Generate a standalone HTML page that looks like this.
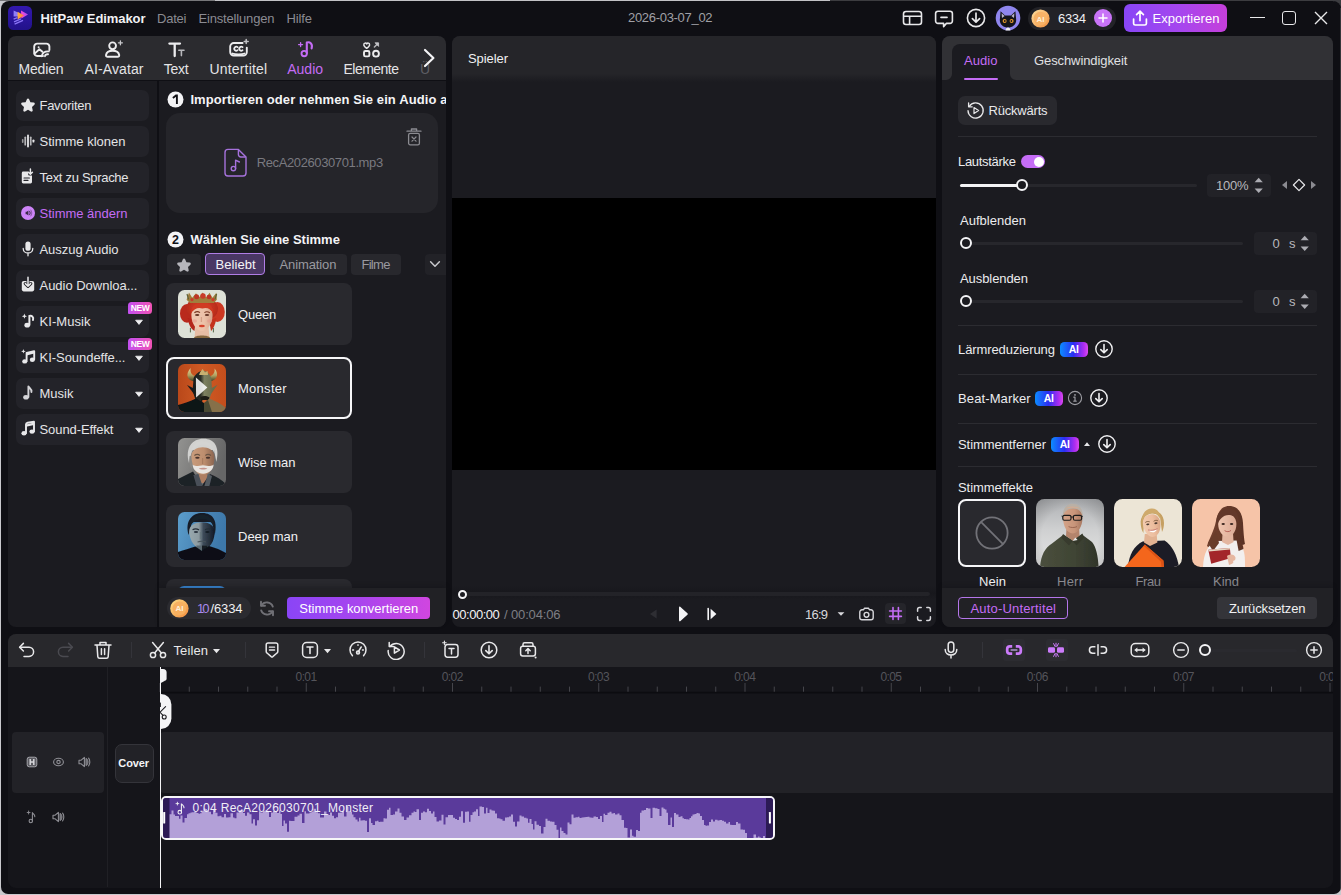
<!DOCTYPE html>
<html><head><meta charset="utf-8"><title>HitPaw Edimakor</title>
<style>
html,body{margin:0;padding:0;}
body{width:1341px;height:895px;overflow:hidden;position:relative;background:#c9c9cd;font-family:"Liberation Sans",sans-serif;}
.b{position:absolute;box-sizing:border-box;display:block;}
.t{position:absolute;white-space:nowrap;line-height:1;display:block;}
</style></head><body>
<div class="b" style="left:0px;top:0px;width:1341px;height:1px;background:#3c3c40;"></div>
<div class="b" style="left:0px;top:0px;width:830px;height:1px;background:#c2c2c6;"></div>
<div class="b" style="left:0px;top:0px;width:215px;height:1px;background:#77777a;"></div>
<div class="b" style="left:1334px;top:0px;width:7px;height:10px;background:#3c3c40;"></div>
<div class="b" style="left:1px;top:1px;width:1340px;height:893px;background:#0f0f14;border-radius:8px 8px 7px 7px;"></div>
<div class="b" style="left:1340px;top:8px;width:1px;height:880px;background:#36363a;"></div>
<svg class="b" style="left:8px;top:6px;" width="24" height="24" viewBox="0 0 24 24" fill="none"><defs><linearGradient id="lg1" x1="0" y1="0" x2="0" y2="1"><stop offset="0" stop-color="#3318ae"/><stop offset="1" stop-color="#22128a"/></linearGradient>
<linearGradient id="lg2" x1="0" y1="0" x2="1" y2="0"><stop offset="0" stop-color="#ffb43a"/><stop offset="1" stop-color="#ff6a4a"/></linearGradient>
<linearGradient id="lg3" x1="0" y1="0" x2="1" y2="0"><stop offset="0" stop-color="#f04ad8"/><stop offset="1" stop-color="#b44af0"/></linearGradient></defs>
<rect width="24" height="24" rx="5.5" fill="url(#lg1)"/>
<path d="M5.6 4.6L10 6.6V10.4L5.6 10.4Z" fill="#8f7cf8"/>
<path d="M13 4.6L20 8.6L13.4 12.4Z" fill="url(#lg3)"/>
<path d="M9.6 5.8L16 9.6L9.6 13.6Z" fill="url(#lg2)"/>
<path d="M5.6 13.2L9.4 11.6M6 15.8L13 12.8M6.6 18.2L15 14.4" stroke="#8a74f6" stroke-width="1.3"/></svg>
<span class="t" style="left:40.5px;top:11.70px;font-size:13px;font-weight:700;letter-spacing:-0.086px;color:#f2f2f4;">HitPaw Edimakor</span>
<span class="t" style="left:157.0px;top:11.70px;font-size:13px;letter-spacing:-0.215px;color:#8b8b92;">Datei</span>
<span class="t" style="left:198.5px;top:11.70px;font-size:13px;letter-spacing:-0.174px;color:#8b8b92;">Einstellungen</span>
<span class="t" style="left:286.5px;top:11.70px;font-size:13px;letter-spacing:-0.129px;color:#8b8b92;">Hilfe</span>
<span class="t" style="left:628.0px;top:11.30px;font-size:13px;letter-spacing:-0.303px;color:#a0a0a6;">2026-03-07_02</span>
<svg class="b" style="left:902px;top:9px;" width="22" height="18" viewBox="0 0 22 18" fill="none"><rect x="1.5" y="2.5" width="18" height="13" rx="2.5" stroke="#e8e8ea" stroke-width="1.6"/><path d="M1.5 7.2H19.5M7.6 7.2V15.5" stroke="#e8e8ea" stroke-width="1.6"/></svg>
<svg class="b" style="left:934px;top:8px;" width="22" height="22" viewBox="0 0 22 22" fill="none"><path d="M4 3.2H16A2.4 2.4 0 0 1 18.4 5.6V13A2.4 2.4 0 0 1 16 15.4H12.4L9.6 18.6V15.4H4A2.4 2.4 0 0 1 1.6 13V5.6A2.4 2.4 0 0 1 4 3.2Z" stroke="#e8e8ea" stroke-width="1.6" stroke-linejoin="round"/><path d="M7 9.3H13" stroke="#e8e8ea" stroke-width="1.7" stroke-linecap="round"/></svg>
<svg class="b" style="left:965px;top:7px;" width="22" height="22" viewBox="0 0 22 22" fill="none"><circle cx="11" cy="11" r="8.6" stroke="#e8e8ea" stroke-width="1.6"/><path d="M11 6.2V15M7.4 11.6L11 15.2L14.6 11.6" stroke="#e8e8ea" stroke-width="1.7" stroke-linecap="round" stroke-linejoin="round"/></svg>
<svg class="b" style="left:995px;top:5px;" width="26" height="26" viewBox="0 0 26 26" fill="none"><circle cx="13" cy="13" r="12.3" fill="#8f86ee"/>
<path d="M5.6 6.2L10 10.6H16L20.4 6.2L21.2 15C21.2 19.6 17.4 22.6 13 22.6C8.6 22.6 4.8 19.6 4.8 15Z" fill="#15151b"/>
<path d="M6.6 8.2L9.6 11L7 13Z" fill="#b8b4c8"/><path d="M19.4 8.2L16.4 11L19 13Z" fill="#b8b4c8"/>
<circle cx="9.6" cy="16" r="2" fill="#e89a2e"/><circle cx="16.6" cy="16" r="2" fill="#e89a2e"/><circle cx="9.8" cy="16" r=".9" fill="#15151b"/><circle cx="16.4" cy="16" r=".9" fill="#15151b"/>
<path d="M10.6 25.4C10.6 21.4 15.4 21.4 15.4 25.4Z" fill="#f0f0f0"/></svg>
<div class="b" style="left:1028px;top:7px;width:88px;height:23px;background:#222227;border-radius:11.5px;"></div>
<svg class="b" style="left:1031px;top:9px;" width="19" height="19" viewBox="0 0 19 19" fill="none"><defs><linearGradient id="cg" x1="0" y1="0" x2="1" y2="1"><stop offset="0" stop-color="#ffe0a0"/><stop offset="1" stop-color="#f2903e"/></linearGradient></defs><circle cx="9.5" cy="9.5" r="9.1" fill="url(#cg)"/><circle cx="9.5" cy="9.5" r="6.8" fill="#f8b266"/><text x="9.5" y="12.5" font-family="Liberation Sans" font-size="8" font-weight="700" fill="#fff0d6" text-anchor="middle">AI</text></svg>
<span class="t" style="left:1058.0px;top:11.80px;font-size:13px;letter-spacing:-0.312px;color:#f0f0f2;">6334</span>
<svg class="b" style="left:1094px;top:9px;" width="18" height="18" viewBox="0 0 18 18" fill="none"><circle cx="9" cy="9" r="9" fill="#c873f7"/><path d="M9 5V13M5 9H13" stroke="#fff" stroke-width="1.5" stroke-linecap="round"/></svg>
<div class="b" style="left:1124px;top:4px;width:103px;height:28px;background:linear-gradient(90deg,#8846f6 0%,#a646ee 55%,#c53fda 100%);border-radius:6px;"></div>
<svg class="b" style="left:1130px;top:8px;" width="20" height="20" viewBox="0 0 20 20" fill="none"><path d="M3.6 11V15.4A1.6 1.6 0 0 0 5.2 17H14.8A1.6 1.6 0 0 0 16.4 15.4V11" stroke="#fff" stroke-width="1.7" stroke-linecap="round"/><path d="M10 12.6V3.4M6.6 6.6L10 3.2L13.4 6.6" stroke="#fff" stroke-width="1.7" stroke-linecap="round" stroke-linejoin="round"/></svg>
<span class="t" style="left:1152.5px;top:11.80px;font-size:13px;letter-spacing:0.050px;color:#fff;">Exportieren</span>
<div class="b" style="left:1249.5px;top:17.2px;width:15px;height:1.3px;background:#e8e8ea;"></div>
<div class="b" style="left:1282px;top:11px;width:14px;height:14px;background:transparent;border-radius:3px;border:1.3px solid #e8e8ea;"></div>
<svg class="b" style="left:1313px;top:10px;" width="16" height="16" viewBox="0 0 16 16" fill="none"><path d="M2 2L14 14M14 2L2 14" stroke="#e8e8ea" stroke-width="1.4"/></svg>
<div class="b" style="left:8px;top:36px;width:438px;height:44px;background:#2b2b2f;border-radius:8px 8px 0 0;"></div>
<svg class="b" style="left:32px;top:41px;" width="20" height="18" viewBox="0 0 20 18" fill="none"><path d="M11 15H5.2A3 3 0 0 1 2.2 12V5.6A3 3 0 0 1 5.2 2.6H14.4A3 3 0 0 1 17.4 5.6V9" stroke="#ececee" stroke-width="1.9" stroke-linecap="round" stroke-linejoin="round"/><path d="M2.6 12.6L7.4 8.2L10.4 10.8" stroke="#ececee" stroke-width="1.9" stroke-linecap="round" stroke-linejoin="round"/><circle cx="6.6" cy="6.2" r="1" fill="#e8e8ea"/><path d="M9.8 15.2C10.2 12.2 12.6 10.2 16.8 10.4" stroke="#ececee" stroke-width="1.9" stroke-linecap="round" stroke-linejoin="round"/><path d="M13 15.2C13.2 14 14.4 13.2 16 13.3" stroke="#ececee" stroke-width="1.9" stroke-linecap="round" stroke-linejoin="round"/></svg>
<span class="t" style="left:18.5px;top:62.25px;font-size:14px;letter-spacing:-0.178px;color:#e4e4e6;">Medien</span>
<svg class="b" style="left:104px;top:39px;" width="22" height="20" viewBox="0 0 22 20" fill="none"><circle cx="8.6" cy="6.8" r="3.4" stroke="#ececee" stroke-width="1.9" stroke-linecap="round" stroke-linejoin="round"/><path d="M3.6 17.8H13.6C14.6 17.8 15.4 17 15.2 16C14.6 13 12 11.8 8.6 11.8C5.2 11.8 2.6 13 2 16C1.8 17 2.6 17.8 3.6 17.8Z" stroke="#ececee" stroke-width="1.9" stroke-linecap="round" stroke-linejoin="round"/><path d="M16.4 1.8V5.8M14.4 3.8H18.4" stroke="#c8c8cc" stroke-width="1.3" stroke-linecap="round"/></svg>
<span class="t" style="left:84.5px;top:62.25px;font-size:14px;letter-spacing:0.113px;color:#e4e4e6;">AI-Avatar</span>
<svg class="b" style="left:167px;top:40px;" width="19" height="19" viewBox="0 0 19 19" fill="none"><path d="M2.4 3.6H13M7.7 3.6V16" stroke="#ececee" stroke-width="2.3" stroke-linecap="round"/><path d="M11.8 10.2H17M14.4 10.2V15.6" stroke="#b8b8bc" stroke-width="1.6" stroke-linecap="round"/></svg>
<span class="t" style="left:163.7px;top:62.25px;font-size:14px;letter-spacing:-0.224px;color:#e4e4e6;">Text</span>
<svg class="b" style="left:228px;top:38px;" width="22" height="20" viewBox="0 0 22 20" fill="none"><path d="M14.6 5H5.8A3.6 3.6 0 0 0 2.2 8.6V14A3.6 3.6 0 0 0 5.8 17.6H15.2A3.6 3.6 0 0 0 18.8 14V9.6" stroke="#ececee" stroke-width="1.9" stroke-linecap="round" stroke-linejoin="round"/><path d="M4.4 15.4C7 16.6 14 16.6 16.6 15.4" stroke="#ececee" stroke-width="1.6" stroke-linecap="round"/><path d="M9.6 9.2A2 2 0 1 0 9.6 12.2M14.6 9.2A2 2 0 1 0 14.6 12.2" stroke="#ececee" stroke-width="1.7" stroke-linecap="round"/><path d="M18.2 1.4V5.4M16.2 3.4H20.2" stroke="#c0c0c4" stroke-width="1.5" stroke-linecap="round"/></svg>
<span class="t" style="left:209.5px;top:62.25px;font-size:14px;letter-spacing:0.167px;color:#e4e4e6;">Untertitel</span>
<svg class="b" style="left:296px;top:39px;" width="20" height="20" viewBox="0 0 20 20" fill="none"><path d="M10.8 14V3.6C13.6 2.6 17 4.4 15.6 9.4" stroke="#c46cf5" stroke-width="2.1" stroke-linecap="round" stroke-linejoin="round"/><circle cx="8.2" cy="14.6" r="2.7" stroke="#c46cf5" stroke-width="1.9"/><path d="M4.6 3.6V7.6M2.6 5.6H6.6" stroke="#c46cf5" stroke-width="1.3" stroke-linecap="round"/></svg>
<span class="t" style="left:287.3px;top:62.25px;font-size:14px;letter-spacing:-0.024px;color:#c46cf5;">Audio</span>
<svg class="b" style="left:361px;top:40px;" width="22" height="20" viewBox="0 0 22 20" fill="none"><rect x="3" y="11" width="5.4" height="5.4" rx="1.4" stroke="#ececee" stroke-width="1.9" stroke-linecap="round" stroke-linejoin="round"/><circle cx="15" cy="13.7" r="2.9" stroke="#ececee" stroke-width="1.9" stroke-linecap="round" stroke-linejoin="round"/><path d="M5.7 8.4C3.6 7 2.6 5.6 2.8 4.4C3 2.8 5 2.6 5.7 4C6.4 2.6 8.4 2.8 8.6 4.4C8.8 5.6 7.8 7 5.7 8.4Z" stroke="#e8e8ea" stroke-width="1.4" stroke-linejoin="round"/><path d="M13.4 7L16.8 3.6" stroke="#b4b4b8" stroke-width="1.5" stroke-linecap="round"/><path d="M14 2.8H17.6V6.4Z" fill="#c4c4c8" stroke="#c4c4c8" stroke-width=".8" stroke-linejoin="round"/></svg>
<span class="t" style="left:343.5px;top:62.25px;font-size:14px;letter-spacing:-0.518px;color:#e4e4e6;">Elemente</span>
<span class="t" style="left:420.0px;top:62.25px;font-size:14px;letter-spacing:0.000px;color:#5e5e64;">Ü</span>
<svg class="b" style="left:422px;top:48px;" width="14" height="20" viewBox="0 0 14 20" fill="none"><path d="M3 2L11.4 10L3 18" stroke="#f4f4f6" stroke-width="2.2" stroke-linecap="round" stroke-linejoin="round"/></svg>
<div class="b" style="left:8px;top:81px;width:149px;height:546px;background:#1b1b20;border-radius:0 0 0 8px;"></div>
<div class="b" style="left:159px;top:81px;width:287px;height:546px;background:#1b1b20;border-radius:0 0 8px 0;"></div>
<div class="b" style="left:16px;top:90px;width:133px;height:31px;background:#232329;border-radius:7px;"></div>
<span class="t" style="left:39.5px;top:99.20px;font-size:13px;letter-spacing:-0.275px;color:#e4e4e6;">Favoriten</span>
<div class="b" style="left:16px;top:126px;width:133px;height:31px;background:#232329;border-radius:7px;"></div>
<span class="t" style="left:39.5px;top:135.20px;font-size:13px;letter-spacing:0.000px;color:#e4e4e6;">Stimme klonen</span>
<div class="b" style="left:16px;top:162px;width:133px;height:31px;background:#232329;border-radius:7px;"></div>
<span class="t" style="left:39.5px;top:171.20px;font-size:13px;letter-spacing:-0.302px;color:#e4e4e6;">Text zu Sprache</span>
<div class="b" style="left:16px;top:198px;width:133px;height:31px;background:#232329;border-radius:7px;"></div>
<span class="t" style="left:39.5px;top:207.20px;font-size:13px;letter-spacing:-0.014px;color:#c46cf5;">Stimme ändern</span>
<div class="b" style="left:16px;top:234px;width:133px;height:31px;background:#232329;border-radius:7px;"></div>
<span class="t" style="left:39.5px;top:243.20px;font-size:13px;letter-spacing:-0.048px;color:#e4e4e6;">Auszug Audio</span>
<div class="b" style="left:16px;top:270px;width:133px;height:31px;background:#232329;border-radius:7px;"></div>
<span class="t" style="left:39.5px;top:279.20px;font-size:13px;letter-spacing:-0.021px;color:#e4e4e6;">Audio Downloa...</span>
<div class="b" style="left:16px;top:306px;width:133px;height:31px;background:#232329;border-radius:7px;"></div>
<span class="t" style="left:39.5px;top:315.20px;font-size:13px;letter-spacing:0.062px;color:#e4e4e6;">KI-Musik</span>
<svg class="b" style="left:133.5px;top:318.5px;" width="10" height="7" viewBox="0 0 10 7" fill="none"><path d="M1.6 1.2H8.4L5 5.4Z" fill="#f0f0f2" stroke="#f0f0f2" stroke-width=".8" stroke-linejoin="round"/></svg>
<div class="b" style="left:16px;top:342px;width:133px;height:31px;background:#232329;border-radius:7px;"></div>
<span class="t" style="left:39.5px;top:351.20px;font-size:13px;letter-spacing:-0.036px;color:#e4e4e6;">KI-Soundeffe...</span>
<svg class="b" style="left:133.5px;top:354.5px;" width="10" height="7" viewBox="0 0 10 7" fill="none"><path d="M1.6 1.2H8.4L5 5.4Z" fill="#f0f0f2" stroke="#f0f0f2" stroke-width=".8" stroke-linejoin="round"/></svg>
<div class="b" style="left:16px;top:378px;width:133px;height:31px;background:#232329;border-radius:7px;"></div>
<span class="t" style="left:39.5px;top:387.20px;font-size:13px;letter-spacing:0.012px;color:#e4e4e6;">Musik</span>
<svg class="b" style="left:133.5px;top:390.5px;" width="10" height="7" viewBox="0 0 10 7" fill="none"><path d="M1.6 1.2H8.4L5 5.4Z" fill="#f0f0f2" stroke="#f0f0f2" stroke-width=".8" stroke-linejoin="round"/></svg>
<div class="b" style="left:16px;top:414px;width:133px;height:31px;background:#232329;border-radius:7px;"></div>
<span class="t" style="left:39.5px;top:423.20px;font-size:13px;letter-spacing:-0.085px;color:#e4e4e6;">Sound-Effekt</span>
<svg class="b" style="left:133.5px;top:426.5px;" width="10" height="7" viewBox="0 0 10 7" fill="none"><path d="M1.6 1.2H8.4L5 5.4Z" fill="#f0f0f2" stroke="#f0f0f2" stroke-width=".8" stroke-linejoin="round"/></svg>
<svg class="b" style="left:20px;top:97px;" width="16" height="16" viewBox="0 0 16 16" fill="none"><path d="M8 1.4C8.5 1.4 8.9 1.7 9.1 2.2L10.4 5.2L13.7 5.6C14.8 5.7 15.2 7 14.4 7.7L12 9.9L12.7 13.2C12.9 14.3 11.8 15 10.9 14.5L8 12.8L5.1 14.5C4.2 15 3.1 14.3 3.3 13.2L4 9.9L1.6 7.7C0.8 7 1.2 5.7 2.3 5.6L5.6 5.2L6.9 2.2C7.1 1.7 7.5 1.4 8 1.4Z" fill="#e8e8ea"/></svg>
<svg class="b" style="left:20px;top:133px;" width="16" height="16" viewBox="0 0 16 16" fill="none"><g fill="#e8e8ea"><rect x="7.1" y="1.5" width="1.8" height="13" rx=".9"/><rect x="4.4" y="3.5" width="1.7" height="9" rx=".85" opacity=".75"/><rect x="9.9" y="3.5" width="1.7" height="9" rx=".85" opacity=".75"/><rect x="1.9" y="6" width="1.6" height="4" rx=".8" opacity=".6"/><rect x="12.5" y="6.4" width="1.9" height="3.2" rx=".9"/></g></svg>
<svg class="b" style="left:20px;top:168px;" width="16" height="17" viewBox="0 0 16 17" fill="none"><path d="M3.2 3.6H8.2V6.6A1 1 0 0 0 9.2 7.6H12V14A1.4 1.4 0 0 1 10.6 15.4H3.2A1.4 1.4 0 0 1 1.8 14V5A1.4 1.4 0 0 1 3.2 3.6Z" fill="#e8e8ea"/><path d="M4 10H9.4M4 12.4H8" stroke="#232329" stroke-width="1.1" stroke-linecap="round"/><path d="M10.4 1V6M8.4 4.2L10.4 6.2L12.4 4.2" stroke="#e8e8ea" stroke-width="1.5" stroke-linecap="round" stroke-linejoin="round"/></svg>
<svg class="b" style="left:20px;top:205px;" width="16" height="16" viewBox="0 0 16 16" fill="none"><circle cx="8" cy="8" r="7" fill="#cd84f7"/><path d="M5.6 6.8H6.8L8.4 5.4V10.6L6.8 9.2H5.6Z" fill="#3a2a48"/><path d="M9.6 6.2C10.4 7.2 10.4 8.8 9.6 9.8" stroke="#3a2a48" stroke-width="1" stroke-linecap="round"/><path d="M10.8 5C12.2 6.6 12.2 9.4 10.8 11" stroke="#3a2a48" stroke-width=".8" stroke-linecap="round" opacity=".6"/></svg>
<svg class="b" style="left:20px;top:240px;" width="16" height="18" viewBox="0 0 16 18" fill="none"><rect x="5.4" y="1.4" width="5.2" height="9.4" rx="2.6" fill="#e8e8ea"/><path d="M3.2 8.4C3.2 11.2 5.4 13 8 13C10.6 13 12.8 11.2 12.8 8.4M8 13V15.8" stroke="#e8e8ea" stroke-width="1.3" stroke-linecap="round"/></svg>
<svg class="b" style="left:20px;top:276px;" width="16" height="17" viewBox="0 0 16 17" fill="none"><rect x="1.8" y="5" width="12.4" height="10.4" rx="1.8" fill="#e8e8ea"/><path d="M8 1.4V10M5.2 7.6L8 10.4L10.8 7.6" stroke="#232329" stroke-width="3" stroke-linecap="round" stroke-linejoin="round"/><path d="M8 1.2V10M5.4 7.6L8 10.2L10.6 7.6" stroke="#e8e8ea" stroke-width="1.5" stroke-linecap="round" stroke-linejoin="round"/></svg>
<svg class="b" style="left:20px;top:312px;" width="17" height="17" viewBox="0 0 17 17" fill="none"><path d="M9.4 13V4C11.4 3.2 14 4.6 13 8" stroke="#e8e8ea" stroke-width="2" stroke-linecap="round"/><ellipse cx="7.2" cy="13.2" rx="2.8" ry="2.4" fill="#e8e8ea"/><path d="M4.4 1.6L5.1 3.5L7 4.2L5.1 4.9L4.4 6.8L3.7 4.9L1.8 4.2L3.7 3.5Z" fill="#e8e8ea"/></svg>
<svg class="b" style="left:20px;top:348px;" width="17" height="17" viewBox="0 0 17 17" fill="none"><path d="M6.6 13.2V5L14.2 3.2V11.6" stroke="#e8e8ea" stroke-width="1.9" stroke-linecap="round" stroke-linejoin="round"/><path d="M6.6 5L14.2 3.2V5.6L6.6 7.4Z" fill="#e8e8ea"/><ellipse cx="4.7" cy="13.4" rx="2.5" ry="2.2" fill="#e8e8ea"/><ellipse cx="12.3" cy="11.8" rx="2.5" ry="2.2" fill="#e8e8ea"/><path d="M3.4 1L4 2.7L5.7 3.3L4 3.9L3.4 5.6L2.8 3.9L1.1 3.3L2.8 2.7Z" fill="#e8e8ea"/></svg>
<svg class="b" style="left:20px;top:384px;" width="16" height="17" viewBox="0 0 16 17" fill="none"><path d="M8.4 13V2.4C9 4.2 12 4.6 11.4 8" stroke="#d4d4d8" stroke-width="1.9" stroke-linecap="round" stroke-linejoin="round"/><ellipse cx="6" cy="13.2" rx="2.8" ry="2.3" fill="#d4d4d8"/></svg>
<svg class="b" style="left:20px;top:420px;" width="17" height="17" viewBox="0 0 17 17" fill="none"><path d="M6 13V4.6C6 3.6 6.6 3 7.6 2.8L14 1.8V11.4" stroke="#e8e8ea" stroke-width="1.9" stroke-linecap="round" stroke-linejoin="round"/><path d="M6 4.4L14 2.6V5L6 6.8Z" fill="#e8e8ea"/><ellipse cx="4" cy="13.2" rx="2.6" ry="2.2" fill="#e8e8ea"/><ellipse cx="12" cy="11.6" rx="2.6" ry="2.2" fill="#e8e8ea"/></svg>
<div class="b" style="left:128.3px;top:302px;width:23.7px;height:12px;background:linear-gradient(90deg,#c250f0,#f052b4);border-radius:3.5px 3.5px 3.5px 1px;"></div>
<span class="t" style="left:130.8px;top:304.10px;font-size:8.5px;font-weight:700;letter-spacing:-0.416px;color:#fff;">NEW</span>
<div class="b" style="left:128.3px;top:338px;width:23.7px;height:12px;background:linear-gradient(90deg,#c250f0,#f052b4);border-radius:3.5px 3.5px 3.5px 1px;"></div>
<span class="t" style="left:130.8px;top:340.10px;font-size:8.5px;font-weight:700;letter-spacing:-0.416px;color:#fff;">NEW</span>
<svg class="b" style="left:167px;top:90.5px;" width="17" height="17" viewBox="0 0 17 17" fill="none"><circle cx="8.5" cy="8.5" r="8" fill="#f4f4f6"/><path d="M5.9 6.9L9 4.5H9.9V13" stroke="#111116" stroke-width="1.9" stroke-linejoin="miter"/></svg>
<div class="b" style="left:190px;top:89px;width:256px;height:20px;overflow:hidden;">
<span class="t" style="left:0.4px;top:3.60px;font-size:13px;font-weight:700;letter-spacing:0.105px;color:#f4f4f6;">Importieren oder nehmen Sie ein Audio auf</span>
</div>
<div class="b" style="left:166px;top:113px;width:272px;height:100px;background:#25252a;border-radius:14px;"></div>
<svg class="b" style="left:223px;top:147px;" width="27" height="32" viewBox="0 0 27 32" fill="none"><path d="M5 2.4H15.4L23 10V26A3 3 0 0 1 20 29H5A3 3 0 0 1 2 26V5.4A3 3 0 0 1 5 2.4Z" stroke="#a672dc" stroke-width="1.4" stroke-linejoin="round"/><path d="M15.4 2.6V7.6A2.4 2.4 0 0 0 17.8 10H22.8" stroke="#a672dc" stroke-width="1.4"/><path d="M12.6 21.4V13.2L16.4 15" stroke="#a672dc" stroke-width="1.4" stroke-linecap="round" stroke-linejoin="round"/><circle cx="10.4" cy="21.6" r="2.2" stroke="#a672dc" stroke-width="1.4"/></svg>
<span class="t" style="left:256.7px;top:155.60px;font-size:13px;letter-spacing:-0.385px;color:#7a7a80;">RecA2026030701.mp3</span>
<svg class="b" style="left:405px;top:127px;" width="18" height="20" viewBox="0 0 18 20" fill="none"><path d="M2 4.2H16M6.4 4V2H11.6V4" stroke="#8b8b91" stroke-width="1.3" stroke-linecap="round" stroke-linejoin="round"/><rect x="3.6" y="6.4" width="10.8" height="11.4" rx="1.6" stroke="#8b8b91" stroke-width="1.3"/><path d="M7 10L11 14.2M11 10L7 14.2" stroke="#8b8b91" stroke-width="1.2" stroke-linecap="round"/></svg>
<svg class="b" style="left:167px;top:231px;" width="17" height="17" viewBox="0 0 17 17" fill="none"><circle cx="8.5" cy="8.5" r="8" fill="#f4f4f6"/><text x="8.5" y="13" font-family="Liberation Sans" font-size="12.5" font-weight="700" fill="#111116" text-anchor="middle">2</text></svg>
<span class="t" style="left:190.4px;top:233.30px;font-size:13px;font-weight:700;letter-spacing:-0.002px;color:#f4f4f6;">Wählen Sie eine Stimme</span>
<div class="b" style="left:167px;top:254px;width:34px;height:21px;background:#27272c;border-radius:4px;"></div>
<svg class="b" style="left:176px;top:256.5px;" width="16" height="16" viewBox="0 0 16 16" fill="none"><path d="M8 1.4C8.5 1.4 8.9 1.7 9.1 2.2L10.4 5.2L13.7 5.6C14.8 5.7 15.2 7 14.4 7.7L12 9.9L12.7 13.2C12.9 14.3 11.8 15 10.9 14.5L8 12.8L5.1 14.5C4.2 15 3.1 14.3 3.3 13.2L4 9.9L1.6 7.7C0.8 7 1.2 5.7 2.3 5.6L5.6 5.2L6.9 2.2C7.1 1.7 7.5 1.4 8 1.4Z" fill="#b6b6bc"/></svg>
<div class="b" style="left:205px;top:253px;width:60px;height:22px;background:#4a3764;border-radius:4px;border:1px solid #b07de6;"></div>
<span class="t" style="left:215.4px;top:257.70px;font-size:13px;letter-spacing:0.089px;color:#f4f4f6;">Beliebt</span>
<div class="b" style="left:269.5px;top:254px;width:77px;height:21px;background:#28282d;border-radius:4px;"></div>
<span class="t" style="left:279.5px;top:257.70px;font-size:13px;letter-spacing:-0.104px;color:#9a9aa0;">Animation</span>
<div class="b" style="left:351px;top:254px;width:50px;height:21px;background:#28282d;border-radius:4px;"></div>
<span class="t" style="left:361.4px;top:257.70px;font-size:13px;letter-spacing:-0.695px;color:#9a9aa0;">Filme</span>
<div class="b" style="left:424.5px;top:254px;width:21.5px;height:21px;background:#222227;border-radius:4px 0 0 4px;"></div>
<svg class="b" style="left:429px;top:260px;" width="12" height="9" viewBox="0 0 12 9" fill="none"><path d="M1.6 1.8L6 6.2L10.4 1.8" stroke="#c8c8cc" stroke-width="1.5" stroke-linecap="round" stroke-linejoin="round"/></svg>
<div class="b" style="left:166px;top:283px;width:186px;height:62px;background:#29292e;border-radius:8px;"></div>
<span class="t" style="left:238.0px;top:308.20px;font-size:13px;letter-spacing:-0.187px;color:#f0f0f2;">Queen</span>
<div class="b" style="left:166px;top:357px;width:186px;height:62px;background:#29292e;border-radius:8px;border:2px solid #f6f6f8;"></div>
<span class="t" style="left:238.0px;top:382.20px;font-size:13px;letter-spacing:0.272px;color:#f0f0f2;">Monster</span>
<div class="b" style="left:166px;top:431px;width:186px;height:62px;background:#29292e;border-radius:8px;"></div>
<span class="t" style="left:238.0px;top:456.20px;font-size:13px;letter-spacing:-0.042px;color:#f0f0f2;">Wise man</span>
<div class="b" style="left:166px;top:505px;width:186px;height:62px;background:#29292e;border-radius:8px;"></div>
<span class="t" style="left:238.0px;top:530.20px;font-size:13px;letter-spacing:0.000px;color:#f0f0f2;">Deep man</span>
<div class="b" style="left:166px;top:579px;width:186px;height:20px;background:#29292e;border-radius:8px 8px 0 0;"></div>
<div class="b" style="left:178px;top:586px;width:48px;height:10px;background:#3b8ee0;border-radius:6px 6px 0 0;"></div>
<svg class="b" style="left:178px;top:290px;" width="48" height="48" viewBox="0 0 48 48" fill="none"><defs><filter id="bl" x="-10%" y="-10%" width="120%" height="120%"><feGaussianBlur stdDeviation=".75"/></filter><filter id="bl2" x="-10%" y="-10%" width="120%" height="120%"><feGaussianBlur stdDeviation="1.3"/></filter><clipPath id="ca"><rect width="48" height="48" rx="6.5"/></clipPath>
<radialGradient id="qh" cx=".5" cy=".45" r=".6"><stop offset="0" stop-color="#dc4228"/><stop offset="1" stop-color="#b0271a"/></radialGradient>
<linearGradient id="qf" x1="0" y1="0" x2="1" y2="0"><stop offset="0" stop-color="#efc9b2"/><stop offset=".6" stop-color="#ecc1a8"/><stop offset="1" stop-color="#d6a48a"/></linearGradient></defs>
<g clip-path="url(#ca)"><rect width="48" height="48" fill="#dde1d7"/>
<g filter="url(#bl)">
<ellipse cx="9" cy="23.4" rx="7" ry="9.4" fill="#b92a1b"/><ellipse cx="39.4" cy="22" rx="7.4" ry="10" fill="#cc3822"/>
<ellipse cx="24" cy="19" rx="16" ry="12" fill="url(#qh)"/>
<path d="M9.6 28C11 37 14 39 16.4 41L18 30Z" fill="#b4281a"/><path d="M38.4 28C37 36 35 39 33 41L31 30Z" fill="#c4321e"/>
<path d="M17.4 37H30.6L31.5 48H16.5Z" fill="#e6bca4"/>
<path d="M13.4 25C12.8 13 35.2 13 34.6 25C34.6 33.6 29.4 41 24 41C18.6 41 13.4 33.6 13.4 25Z" fill="url(#qf)"/>
<path d="M12.8 24C13 14.5 20 12 24.6 14C29 12 35.4 14.4 35.4 24C33 18.6 28.6 17 24.4 18.6C20.6 17 15.6 18.6 12.8 24Z" fill="#d03a22"/>
<path d="M8.6 9.8L11 2.6L14.2 7.8L18 3.2L21 7.6L24.6 2.6L28 7.4L31.6 2.8L34.4 7.8L38.4 2.8L38.8 9.8L36 13H12Z" fill="#a07e3c"/>
<circle cx="18.6" cy="6.8" r="2.5" fill="#bd3628"/><circle cx="25" cy="6" r="2.7" fill="#c93b2a"/><circle cx="31" cy="7" r="2.3" fill="#bd3628"/><circle cx="14" cy="9.6" r="1.6" fill="#c93b2a"/><circle cx="35" cy="9.6" r="1.6" fill="#c93b2a"/>
<path d="M9 4L10.6 9.4M38.6 4L37 9.4" stroke="#5e6236" stroke-width="1.2"/>
<path d="M16.4 22.8C18 21.6 20.6 21.6 22 22.6M26.4 22.6C27.8 21.6 30.2 21.6 31.8 22.8" stroke="#7a3a24" stroke-width="1.1"/>
<ellipse cx="19.2" cy="25" rx="2.2" ry="1" fill="#653626"/><ellipse cx="29" cy="25" rx="2.2" ry="1" fill="#653626"/>
<ellipse cx="16.4" cy="31" rx="2.6" ry="1.8" fill="#e6958a" opacity=".55"/><ellipse cx="31.6" cy="31" rx="2.6" ry="1.8" fill="#e6958a" opacity=".55"/>
<path d="M23.4 27V32" stroke="#d6a088" stroke-width="1.3"/>
<ellipse cx="23.9" cy="36" rx="3" ry="1.35" fill="#d4432c"/>
<path d="M16 48C16 44.6 32 44.6 32 48Z" fill="#85663c"/>
<path d="M12.4 38V42.4M35.4 38V42.4" stroke="#46583a" stroke-width=".9"/>
</g></g></svg>
<svg class="b" style="left:178px;top:364px;" width="48" height="48" viewBox="0 0 48 48" fill="none"><defs><clipPath id="cb"><rect width="48" height="48" rx="6.5"/></clipPath>
<linearGradient id="mg" x1="0" y1="0" x2="1" y2="0"><stop offset="0" stop-color="#b9481a"/><stop offset=".5" stop-color="#cf5a24"/><stop offset="1" stop-color="#c44e1c"/></linearGradient>
<linearGradient id="mh" x1="0" y1="0" x2="1" y2="0"><stop offset="0" stop-color="#15181a"/><stop offset=".42" stop-color="#2a2e26"/><stop offset=".6" stop-color="#7d8060"/><stop offset="1" stop-color="#6a6e4e"/></linearGradient>
<linearGradient id="mhorn" x1="0" y1="0" x2="0" y2="1"><stop offset="0" stop-color="#e6d69a"/><stop offset=".55" stop-color="#b0a060"/><stop offset="1" stop-color="#3e3e22"/></linearGradient></defs>
<g clip-path="url(#cb)"><rect width="48" height="48" fill="url(#mg)"/>
<g filter="url(#bl)">
<path d="M16.6 17.4C9.6 16.6 6.6 10.6 12.6 4C11.8 9.4 14.6 11.8 19.4 13Z" fill="url(#mhorn)"/>
<path d="M31.4 17.4C38.4 16.6 41.8 10.6 36.6 4.4C37.2 9.4 34.4 11.8 29.6 13Z" fill="url(#mhorn)"/>
<path d="M9 21L17 25L16 30Z" fill="#17181a"/><path d="M39.6 20.8L31 25.6L32.6 30.4Z" fill="#6a6e48"/>
<path d="M15.6 14C18 8.6 24 5.6 25 7.4C27 5.6 32 9 33.4 14.6L34 27L30.4 38.6H18.4L14.6 27Z" fill="url(#mh)"/>
<path d="M22 8.6L24.6 5L27 8.4L29.6 7L30 11H21Z" fill="#c8b070"/>
<path d="M22.4 33C25 31.4 29.6 31.6 31.4 33.6L30 38.4H23.4Z" fill="#1c1a16"/><path d="M24 36.6C26 35.8 28.6 36 29.8 37L29 39H24.6Z" fill="#d8602a"/>
<path d="M0 48V41C6 39.6 12 37.4 18 34.6L26 39V48Z" fill="#101318"/>
<path d="M26 48V39L31.4 34.6C37 37 43 40 48 44V48Z" fill="#86704a"/>
<path d="M26 39L30 36L34 48H26Z" fill="#4a4a32"/>
</g>
<path d="M17.9 13.6L29.4 23.6L18.1 33.6Z" fill="#fff" fill-opacity=".86"/>
</g></svg>
<svg class="b" style="left:178px;top:438px;" width="48" height="48" viewBox="0 0 48 48" fill="none"><defs><clipPath id="cc"><rect width="48" height="48" rx="6.5"/></clipPath>
<linearGradient id="wg" x1="0" y1="0" x2="1" y2=".3"><stop offset="0" stop-color="#939391"/><stop offset=".5" stop-color="#7c7c7b"/><stop offset="1" stop-color="#666667"/></linearGradient>
<linearGradient id="wf" x1="0" y1="0" x2="1" y2="0"><stop offset="0" stop-color="#c99c7c"/><stop offset=".55" stop-color="#bd8e6e"/><stop offset="1" stop-color="#8a6450"/></linearGradient></defs>
<g clip-path="url(#cc)"><rect width="48" height="48" fill="url(#wg)"/>
<g filter="url(#bl)">
<path d="M11 25C6.6 9 15 .4 26 .8C36 1 42 8 38.4 24L36 12H14Z" fill="#d2d2d0"/>
<path d="M11.6 18C10.6 24 12 29 14 31L14.6 18Z" fill="#8a8884"/>
<path d="M13.4 18.6C12.8 6.6 36 6 36.4 18.6C36.8 28 32 37.6 25.2 37.6C18.6 37.6 13.6 28 13.4 18.6Z" fill="url(#wf)"/>
<path d="M13 15.6C14 5 21 2.8 25.6 3.4C31 3.8 36.4 7.4 36.6 15.6C33.6 8.4 29 6.6 25 6.8C20.4 6.8 15.8 8.6 13 15.6Z" fill="#d4d4d2"/>
<path d="M16.4 17.6C18 16.4 20.6 16.4 22 17.4M27.4 17.4C28.8 16.4 31.4 16.4 33 17.6" stroke="#6a5444" stroke-width="1.2"/>
<ellipse cx="19.4" cy="19.8" rx="2.2" ry="1" fill="#46302a"/><ellipse cx="30" cy="19.8" rx="2.2" ry="1" fill="#46302a"/>
<path d="M24.6 20V26" stroke="#a87c60" stroke-width="1.2"/>
<path d="M14.6 26.6C15 38.4 35 39 35.6 26.6C33 29.4 29 27.2 25 27.2C21.4 27.2 17 29.4 14.6 26.6Z" fill="#e8e4e0"/>
<path d="M20.8 30.4C23 29.4 27.2 29.4 29.4 30.4C27.2 31.8 23 31.8 20.8 30.4Z" fill="#c4948c"/>
<path d="M20.4 36.6H29.8L30 45H20Z" fill="#ae7e62"/>
<path d="M0 48V41C5 38.4 10 36 15 33.6L24 47.6L32 36C38 38.4 43.6 41.6 48 46V48Z" fill="#1c2026"/>
<path d="M15.4 37L20.4 36L24.6 48H18.6Z" fill="#4a5058"/><path d="M29.8 36L34 38L31.4 48H26.4Z" fill="#555b63"/>
</g></g></svg>
<svg class="b" style="left:178px;top:512px;" width="48" height="48" viewBox="0 0 48 48" fill="none"><defs><clipPath id="cd"><rect width="48" height="48" rx="6.5"/></clipPath>
<linearGradient id="dg" x1="0" y1="0" x2="1" y2=".25"><stop offset="0" stop-color="#5b9dcb"/><stop offset=".55" stop-color="#4a86b6"/><stop offset="1" stop-color="#3d78aa"/></linearGradient>
<linearGradient id="df" x1="0" y1="0" x2="1" y2="0"><stop offset="0" stop-color="#98a8ae"/><stop offset=".38" stop-color="#8c9aa0"/><stop offset="0.56" stop-color="#3c4a58"/><stop offset="1" stop-color="#121a26"/></linearGradient></defs>
<g clip-path="url(#cd)"><rect width="48" height="48" fill="url(#dg)"/>
<g filter="url(#bl)">
<path d="M10.6 23C6.6 8 15 .8 24.6 1C34.6 1.2 40 8 36.8 23L34 10H14Z" fill="#161c26"/>
<path d="M11.2 19.4C11 7.6 36.4 7 36.6 19.4C36.8 29 31.6 37.4 24.6 37.4C18 37.4 11.4 29 11.2 19.4Z" fill="url(#df)"/>
<path d="M11 15.6C11.6 5 18.6 2.4 24.6 2.8C31 3 36.4 7 36.6 15.6C33.4 8.8 29 7.2 24.6 7.4C19.6 7.4 14.4 9 11 15.6Z" fill="#19202b"/>
<path d="M14.6 17.8C16.2 16.8 19 16.8 21 17.8M27 17.8C28.8 16.8 31.4 16.8 33 17.8" stroke="#242e38" stroke-width="1.3"/>
<ellipse cx="18" cy="20" rx="2.2" ry="1" fill="#2a3440"/><ellipse cx="29.4" cy="20" rx="2.2" ry="1" fill="#161e28"/>
<path d="M22.6 20V27" stroke="#66747c" stroke-width="1.3"/>
<path d="M19.6 30C21.8 29.2 25.8 29.2 28 30" stroke="#46525a" stroke-width="1.1"/>
<path d="M18.4 33.4H29.4L30.4 42H18Z" fill="#5a6870"/><path d="M24 33.4H29.4L30.4 42H24Z" fill="#121a24"/>
<path d="M0 48V40C6 38 12 36.4 17.4 34.6L24 39L31 34C37.4 35.8 43 38 48 41V48Z" fill="#0b0f16"/>
</g></g></svg>
<div class="b" style="left:159px;top:588px;width:287px;height:39px;background:#212125;border-radius:0 0 8px 0;box-shadow:0 -2px 4px rgba(15,15,20,.3);"></div>
<div class="b" style="left:166.5px;top:597px;width:84px;height:22px;background:#2b2b30;border-radius:11px;"></div>
<svg class="b" style="left:169.5px;top:598.7px;" width="19" height="19" viewBox="0 0 19 19" fill="none"><defs><linearGradient id="cg2" x1="0" y1="0" x2="1" y2="1"><stop offset="0" stop-color="#ffe08a"/><stop offset="1" stop-color="#f28a3a"/></linearGradient></defs><circle cx="9.4" cy="9.4" r="9.2" fill="url(#cg2)"/><circle cx="9.4" cy="9.4" r="6.8" fill="#f8b060"/><text x="9.4" y="12.4" font-family="Liberation Sans" font-size="8" font-weight="700" fill="#fff1d8" text-anchor="middle">AI</text></svg>
<span class="t" style="left:197.0px;top:602.00px;font-size:13px;letter-spacing:-1.969px;color:#a988ec;">10</span>
<span class="t" style="left:210.5px;top:602.00px;font-size:13px;letter-spacing:-0.137px;color:#f0f0f2;">/6334</span>
<svg class="b" style="left:257.5px;top:599.5px;" width="18" height="17" viewBox="0 0 18 17" fill="none"><path d="M14.8 6.6A6.4 6.4 0 0 0 3.4 5.4M3.2 10.4A6.4 6.4 0 0 0 14.6 11.6" stroke="#707076" stroke-width="1.9" stroke-linecap="round"/><path d="M3 1.8V5.8H7M15 15.2V11.2H11" stroke="#707076" stroke-width="1.9" stroke-linecap="round" stroke-linejoin="round"/></svg>
<div class="b" style="left:287px;top:597px;width:143px;height:22px;background:linear-gradient(90deg,#8a45f6 0%,#a845ee 50%,#d046e0 100%);border-radius:4px;"></div>
<span class="t" style="left:299.3px;top:602.00px;font-size:13px;letter-spacing:-0.013px;color:#fff;">Stimme konvertieren</span>
<div class="b" style="left:452px;top:36px;width:484px;height:591px;background:#1b1b20;border-radius:8px;"></div>
<div class="b" style="left:452px;top:36px;width:484px;height:46px;background:linear-gradient(180deg,#252529 0,#252529 82%,#1b1b20 100%);border-radius:8px 8px 0 0;"></div>
<span class="t" style="left:468.0px;top:52.30px;font-size:13px;letter-spacing:-0.081px;color:#f0f0f2;">Spieler</span>
<div class="b" style="left:452px;top:198px;width:484px;height:272px;background:#000;"></div>
<div class="b" style="left:452px;top:586px;width:484px;height:14px;background:linear-gradient(180deg,rgba(20,20,25,0),rgba(20,20,25,.55) 50%,rgba(20,20,25,0));"></div>
<div class="b" style="left:463px;top:592px;width:467px;height:4px;background:#232328;border-radius:2px;"></div>
<div class="b" style="left:458px;top:589.5px;width:9px;height:9px;background:#1b1b20;border-radius:4.5px;border:2px solid #f4f4f6;"></div>
<span class="t" style="left:452.5px;top:608.00px;font-size:13px;letter-spacing:-0.475px;color:#f4f4f6;">00:00:00</span>
<span class="t" style="left:504.0px;top:608.00px;font-size:13px;letter-spacing:-0.138px;color:#7e7e84;">/ 00:04:06</span>
<svg class="b" style="left:648px;top:608px;" width="10" height="12" viewBox="0 0 10 12" fill="none"><path d="M8.6 1.4V10.6L2 6Z" fill="#2e2e33"/></svg>
<svg class="b" style="left:677px;top:605px;" width="12" height="18" viewBox="0 0 12 18" fill="none"><path d="M2 2.4C2 1.7 2.7 1.4 3.2 1.7L10.4 8.2C10.9 8.6 10.9 9.4 10.4 9.8L3.2 16.3C2.7 16.6 2 16.3 2 15.6Z" fill="#f4f4f6"/></svg>
<svg class="b" style="left:706px;top:607px;" width="12" height="14" viewBox="0 0 12 14" fill="none"><path d="M2.2 1.6V12.4" stroke="#f4f4f6" stroke-width="1.6" stroke-linecap="round"/><path d="M4.6 1.8L10.4 7L4.6 12.2Z" fill="#f4f4f6"/></svg>
<span class="t" style="left:805.0px;top:608.00px;font-size:13px;letter-spacing:-0.771px;color:#d8d8dc;">16:9</span>
<svg class="b" style="left:836px;top:611px;" width="10" height="6" viewBox="0 0 10 6" fill="none"><path d="M1.6 1.2H8.4L5 4.8Z" fill="#d8d8dc"/></svg>
<svg class="b" style="left:858px;top:605.5px;" width="17" height="16" viewBox="0 0 17 16" fill="none"><path d="M5.6 3.8L6.4 2.2H10.6L11.4 3.8H13A2.2 2.2 0 0 1 15.2 6V11.6A2.2 2.2 0 0 1 13 13.8H4A2.2 2.2 0 0 1 1.8 11.6V6A2.2 2.2 0 0 1 4 3.8Z" stroke="#d8d8dc" stroke-width="1.4" stroke-linejoin="round"/><circle cx="8.5" cy="8.8" r="2.4" stroke="#d8d8dc" stroke-width="1.4"/></svg>
<div class="b" style="left:885px;top:603px;width:21px;height:21px;background:#25252a;border-radius:4px;"></div>
<svg class="b" style="left:888px;top:606px;" width="15" height="15" viewBox="0 0 15 15" fill="none"><path d="M5 1.6V13.4M10.4 1.6V13.4M1.6 5H13.4M1.6 10.4H13.4" stroke="#c46cf5" stroke-width="1.6" stroke-linecap="round"/></svg>
<svg class="b" style="left:916px;top:606px;" width="16" height="16" viewBox="0 0 16 16" fill="none"><path d="M1.6 5.2V3.4A1.8 1.8 0 0 1 3.4 1.6H5.2M10.8 1.6H12.6A1.8 1.8 0 0 1 14.4 3.4V5.2M14.4 10.8V12.6A1.8 1.8 0 0 1 12.6 14.4H10.8M5.2 14.4H3.4A1.8 1.8 0 0 1 1.6 12.6V10.8" stroke="#d8d8dc" stroke-width="1.5" stroke-linecap="round"/></svg>
<div class="b" style="left:942px;top:36px;width:391px;height:591px;background:#1b1b20;border-radius:8px;"></div>
<div class="b" style="left:942px;top:36px;width:391px;height:44px;background:#313135;border-radius:8px 8px 0 0;"></div>
<div class="b" style="left:952px;top:44px;width:58px;height:36px;background:#1b1b20;border-radius:8px 8px 0 0;"></div>
<svg class="b" style="left:946px;top:74px;" width="6" height="6" viewBox="0 0 6 6" fill="none"><path d="M6 0V6H0A6 6 0 0 0 6 0Z" fill="#1b1b20"/></svg>
<svg class="b" style="left:1010px;top:74px;" width="6" height="6" viewBox="0 0 6 6" fill="none"><path d="M0 0V6H6A6 6 0 0 1 0 0Z" fill="#1b1b20"/></svg>
<span class="t" style="left:964.0px;top:53.70px;font-size:13px;letter-spacing:0.059px;color:#c46cf5;">Audio</span>
<div class="b" style="left:964px;top:77.5px;width:34px;height:2.5px;background:#c46cf5;border-radius:1.2px;"></div>
<span class="t" style="left:1034.0px;top:53.70px;font-size:13px;letter-spacing:-0.092px;color:#e0e0e3;">Geschwindigkeit</span>
<div class="b" style="left:958px;top:96px;width:99px;height:29px;background:#29292e;border-radius:7px;"></div>
<svg class="b" style="left:966px;top:101px;" width="19" height="19" viewBox="0 0 19 19" fill="none"><path d="M3.2 5.4A7.6 7.6 0 1 1 2 9.6" stroke="#e8e8ea" stroke-width="1.3" stroke-linecap="round"/><path d="M2.6 2V5.8H6.2" stroke="#e8e8ea" stroke-width="1.3" stroke-linecap="round" stroke-linejoin="round"/><path d="M8 6.6L12.6 9.6L8 12.6Z" stroke="#e8e8ea" stroke-width="1.2" stroke-linejoin="round"/></svg>
<span class="t" style="left:988.6px;top:104.00px;font-size:13px;letter-spacing:-0.211px;color:#e8e8ea;">Rückwärts</span>
<div class="b" style="left:958px;top:136px;width:359px;height:1px;background:#2c2c31;"></div>
<div class="b" style="left:958px;top:325px;width:359px;height:1px;background:#2c2c31;"></div>
<div class="b" style="left:958px;top:374px;width:359px;height:1px;background:#2c2c31;"></div>
<div class="b" style="left:958px;top:423px;width:359px;height:1px;background:#2c2c31;"></div>
<div class="b" style="left:958px;top:466px;width:359px;height:1px;background:#2c2c31;"></div>
<span class="t" style="left:958.0px;top:155.00px;font-size:13px;letter-spacing:-0.302px;color:#ececee;">Lautstärke</span>
<div class="b" style="left:1021px;top:155px;width:24px;height:13px;background:#c56df6;border-radius:6.5px;"></div>
<div class="b" style="left:1033.5px;top:156.5px;width:10px;height:10px;background:#fff;border-radius:5px;"></div>
<div class="b" style="left:960px;top:183.5px;width:237px;height:3px;background:#27272c;border-radius:1.5px;"></div>
<div class="b" style="left:960px;top:183.5px;width:58px;height:3px;background:#f4f4f6;border-radius:1.5px;"></div>
<div class="b" style="left:1016px;top:179px;width:12px;height:12px;background:#1b1b20;border-radius:6px;border:2px solid #f4f4f6;"></div>
<div class="b" style="left:1207px;top:173.5px;width:64px;height:23.5px;background:#222227;border-radius:4px;"></div>
<span class="t" style="left:1216.0px;top:178.80px;font-size:13px;letter-spacing:-0.255px;color:#b8b8bd;">100%</span>
<svg class="b" style="left:1253.5px;top:176.6px;" width="10" height="17" viewBox="0 0 10 17" fill="none"><path d="M.6 5.2L4.7 .8L8.8 5.2Z" fill="#acacb2"/><path d="M.6 11.6L4.7 16L8.8 11.6Z" fill="#acacb2"/></svg>
<svg class="b" style="left:1281px;top:180px;" width="7" height="10" viewBox="0 0 7 10" fill="none"><path d="M6 1V9L1 5Z" fill="#8b8b91"/></svg>
<svg class="b" style="left:1292px;top:178px;" width="14" height="14" viewBox="0 0 14 14" fill="none"><path d="M7 1.4L12.6 7L7 12.6L1.4 7Z" stroke="#e8e8ea" stroke-width="1.2" stroke-linejoin="round"/></svg>
<svg class="b" style="left:1310px;top:180px;" width="7" height="10" viewBox="0 0 7 10" fill="none"><path d="M1 1V9L6 5Z" fill="#8b8b91"/></svg>
<span class="t" style="left:960.0px;top:213.80px;font-size:13px;letter-spacing:0.021px;color:#ececee;">Aufblenden</span>
<div class="b" style="left:960px;top:241.70000000000002px;width:283px;height:3px;background:#27272c;border-radius:1.5px;"></div>
<div class="b" style="left:960px;top:237.20000000000002px;width:12px;height:12px;background:#1b1b20;border-radius:6px;border:2px solid #f4f4f6;"></div>
<div class="b" style="left:1254px;top:231.70000000000002px;width:63px;height:23.5px;background:#222227;border-radius:4px;"></div>
<span class="t" style="left:1272.5px;top:237.00px;font-size:13px;letter-spacing:0.000px;color:#b8b8bd;">0</span>
<span class="t" style="left:1289.0px;top:237.00px;font-size:13px;letter-spacing:0.000px;color:#b8b8bd;">s</span>
<svg class="b" style="left:1299.6px;top:234.8px;" width="10" height="17" viewBox="0 0 10 17" fill="none"><path d="M.6 5.2L4.7 .8L8.8 5.2Z" fill="#acacb2"/><path d="M.6 11.6L4.7 16L8.8 11.6Z" fill="#acacb2"/></svg>
<span class="t" style="left:960.0px;top:271.80px;font-size:13px;letter-spacing:-0.078px;color:#ececee;">Ausblenden</span>
<div class="b" style="left:960px;top:299.7px;width:283px;height:3px;background:#27272c;border-radius:1.5px;"></div>
<div class="b" style="left:960px;top:295.2px;width:12px;height:12px;background:#1b1b20;border-radius:6px;border:2px solid #f4f4f6;"></div>
<div class="b" style="left:1254px;top:289.7px;width:63px;height:23.5px;background:#222227;border-radius:4px;"></div>
<span class="t" style="left:1272.5px;top:295.00px;font-size:13px;letter-spacing:0.000px;color:#b8b8bd;">0</span>
<span class="t" style="left:1289.0px;top:295.00px;font-size:13px;letter-spacing:0.000px;color:#b8b8bd;">s</span>
<svg class="b" style="left:1299.6px;top:292.8px;" width="10" height="17" viewBox="0 0 10 17" fill="none"><path d="M.6 5.2L4.7 .8L8.8 5.2Z" fill="#acacb2"/><path d="M.6 11.6L4.7 16L8.8 11.6Z" fill="#acacb2"/></svg>
<span class="t" style="left:958.0px;top:343.00px;font-size:13px;letter-spacing:-0.094px;color:#ececee;">Lärmreduzierung</span>
<div class="b" style="left:1060px;top:341.6px;width:28px;height:15px;background:linear-gradient(90deg,#0c8cff 0%,#2b2ef2 48%,#b02df0 86%,#dc4af0 100%);border-radius:4.5px;"></div>
<span class="t" style="left:1068.8px;top:344.01px;font-size:10.5px;font-weight:700;letter-spacing:-0.500px;color:#fff;">AI</span>
<svg class="b" style="left:1094px;top:338.6px;" width="20" height="20" viewBox="0 0 20 20" fill="none"><circle cx="10" cy="10" r="8.2" stroke="#f0f0f2" stroke-width="1.4"/><path d="M10 5.6V13.6M6.8 10.6L10 13.8L13.2 10.6" stroke="#f0f0f2" stroke-width="1.6" stroke-linecap="round" stroke-linejoin="round"/></svg>
<span class="t" style="left:958.0px;top:391.90px;font-size:13px;letter-spacing:0.117px;color:#ececee;">Beat-Marker</span>
<div class="b" style="left:1035px;top:390.6px;width:28px;height:15px;background:linear-gradient(90deg,#0c8cff 0%,#2b2ef2 48%,#b02df0 86%,#dc4af0 100%);border-radius:4.5px;"></div>
<span class="t" style="left:1043.8px;top:393.01px;font-size:10.5px;font-weight:700;letter-spacing:-0.500px;color:#fff;">AI</span>
<svg class="b" style="left:1067px;top:390px;" width="16" height="16" viewBox="0 0 16 16" fill="none"><circle cx="8" cy="8" r="6.6" stroke="#9c9ca2" stroke-width="1.1"/><path d="M8 7.2V11.2M6.8 7.2H8M6.8 11.2H9.2" stroke="#9c9ca2" stroke-width="1.2" stroke-linecap="round"/><circle cx="8" cy="4.9" r=".9" fill="#9c9ca2"/></svg>
<svg class="b" style="left:1089px;top:387.6px;" width="20" height="20" viewBox="0 0 20 20" fill="none"><circle cx="10" cy="10" r="8.2" stroke="#f0f0f2" stroke-width="1.4"/><path d="M10 5.6V13.6M6.8 10.6L10 13.8L13.2 10.6" stroke="#f0f0f2" stroke-width="1.6" stroke-linecap="round" stroke-linejoin="round"/></svg>
<span class="t" style="left:958.0px;top:437.80px;font-size:13px;letter-spacing:-0.067px;color:#ececee;">Stimmentferner</span>
<div class="b" style="left:1051px;top:436.6px;width:28px;height:15px;background:linear-gradient(90deg,#0c8cff 0%,#2b2ef2 48%,#b02df0 86%,#dc4af0 100%);border-radius:4.5px;"></div>
<span class="t" style="left:1059.8px;top:439.01px;font-size:10.5px;font-weight:700;letter-spacing:-0.500px;color:#fff;">AI</span>
<svg class="b" style="left:1083px;top:441px;" width="8" height="6" viewBox="0 0 8 6" fill="none"><path d="M1 5L4 1.2L7 5Z" fill="#e8e8ea"/></svg>
<svg class="b" style="left:1097px;top:433.6px;" width="20" height="20" viewBox="0 0 20 20" fill="none"><circle cx="10" cy="10" r="8.2" stroke="#f0f0f2" stroke-width="1.4"/><path d="M10 5.6V13.6M6.8 10.6L10 13.8L13.2 10.6" stroke="#f0f0f2" stroke-width="1.6" stroke-linecap="round" stroke-linejoin="round"/></svg>
<span class="t" style="left:958.0px;top:480.80px;font-size:13px;letter-spacing:-0.057px;color:#ececee;">Stimmeffekte</span>
<div class="b" style="left:958px;top:499px;width:68px;height:68px;background:#29292e;border-radius:8px;border:2px solid #f6f6f8;"></div>
<svg class="b" style="left:975px;top:516px;" width="34" height="34" viewBox="0 0 34 34" fill="none"><circle cx="17" cy="17" r="15.6" stroke="#727278" stroke-width="1.8"/><path d="M6.2 6.2L27.8 27.8" stroke="#727278" stroke-width="1.8"/></svg>
<svg class="b" style="left:1036px;top:499px;" width="68" height="68" viewBox="0 0 68 68" fill="none"><defs><clipPath id="e1"><rect width="68" height="68" rx="8.5"/></clipPath>
<linearGradient id="e1g" x1="0" y1="0" x2="0" y2="1"><stop offset="0" stop-color="#aeb0b3"/><stop offset=".45" stop-color="#cfd0d1"/><stop offset="1" stop-color="#e6e6e6"/></linearGradient>
<radialGradient id="e1v" cx=".5" cy=".55" r=".75"><stop offset=".55" stop-color="#000" stop-opacity="0"/><stop offset="1" stop-color="#000" stop-opacity=".22"/></radialGradient>
<linearGradient id="e1s" x1="0" y1="0" x2="1" y2="0"><stop offset="0" stop-color="#4a4f3d"/><stop offset=".6" stop-color="#3f4434"/><stop offset="1" stop-color="#30342a"/></linearGradient>
<linearGradient id="e1f" x1="0" y1="0" x2="1" y2="0"><stop offset="0" stop-color="#d4a287"/><stop offset=".6" stop-color="#c8957a"/><stop offset="1" stop-color="#a87860"/></linearGradient></defs>
<g clip-path="url(#e1)"><rect width="68" height="68" fill="url(#e1g)"/><rect width="68" height="68" fill="url(#e1v)"/><g filter="url(#bl)">
<path d="M4 68C5 56 9 49 16 44.6L27 36L36.6 41L46 35.6L56 43C60 48 62 56 62.6 68Z" fill="url(#e1s)"/>
<path d="M30.6 28H43L43.6 37L37 42L30 37Z" fill="#b4846c"/>
<path d="M27 35L36.6 42L33 46.6L25.4 39Z" fill="#373b2d"/><path d="M46.4 34.6L36.6 42L40.6 46.6L48 38.4Z" fill="#34382b"/>
<path d="M36.6 42L39.4 38.6L41.6 41Z" fill="#e6e6e6"/>
<path d="M27 19C26.4 5 46.8 4.6 46.4 19C46.6 27 42.4 34.4 36.8 34.4C31 34.4 27.2 27 27 19Z" fill="url(#e1f)"/>
<path d="M26.6 18C27 6.6 33 4.6 37 4.8C42 5 46.8 8 47 18C45.4 12 42 9.6 37 9.6C32 9.6 28.6 12 26.6 18Z" fill="#b9b0a6"/>
<path d="M30 9.4C33 6.8 41 6.8 44 9.8C40 8.4 34 8.4 30 9.4Z" fill="#d2ac94"/>
<rect x="26.8" y="16.4" width="8.2" height="4.8" rx="1.5" stroke="#1c1c1c" stroke-width="1.15"/><rect x="37.4" y="16.4" width="8.2" height="4.8" rx="1.5" stroke="#1c1c1c" stroke-width="1.15"/><path d="M35 18H37.4M25.6 17.2L26.8 17.8M45.6 17.8L46.8 17.2" stroke="#1c1c1c" stroke-width="1"/>
<path d="M32.6 27.6C34.6 28.8 39 28.8 41 27.6" stroke="#94604c" stroke-width=".9"/>
</g></g></svg>
<svg class="b" style="left:1114px;top:499px;" width="68" height="68" viewBox="0 0 68 68" fill="none"><defs><clipPath id="e2"><rect width="68" height="68" rx="8.5"/></clipPath>
<linearGradient id="e2f" x1="0" y1="0" x2="1" y2="0"><stop offset="0" stop-color="#f2cbb0"/><stop offset=".6" stop-color="#ecbd9e"/><stop offset="1" stop-color="#d8a484"/></linearGradient></defs>
<g clip-path="url(#e2)"><rect width="68" height="68" fill="#ece5d6"/><g filter="url(#bl)">
<path d="M14 68C15 56 20 47 28.6 42.6L50.6 41.4C58 46 63 56 65 68Z" fill="#1a1a27"/>
<path d="M30.8 35H42.6L43.4 43.6L36 47L30 43.6Z" fill="#e2b292"/>
<path d="M26.8 26C24.6 8 50 6.4 50 24C50 28 49 31 48 33L46 18C42 13 33 13.4 30 19L29.4 34C28 32 27.2 29 26.8 26Z" fill="#c6a062"/>
<g transform="rotate(-8 37.6 25)"><path d="M29 24C29 12.4 46.4 12.2 46.4 24C46.6 32 42.6 38 37.8 38C33 38 29.2 32 29 24Z" fill="url(#e2f)"/>
<path d="M28.4 22C29 11.6 36 9 40 9.8C45 10.4 48 14.6 47 22C45 15.6 41.6 13.6 38 14.4C34 14.6 30.6 17 28.4 22Z" fill="#cfaa6c"/>
<path d="M31.6 22.6C32.8 21.8 34.8 21.8 36 22.6M40 22.6C41.2 21.8 43 21.8 44.2 22.6" stroke="#7a5a3c" stroke-width=".9"/>
<ellipse cx="33.8" cy="24.8" rx="1.6" ry=".9" fill="#4a3a30"/><ellipse cx="42" cy="24.8" rx="1.6" ry=".9" fill="#4a3a30"/>
<path d="M33.6 30.6C35.8 34.4 40.4 34.4 42.4 30.6C39.8 31.8 36.4 31.8 33.6 30.6Z" fill="#fff"/><path d="M33.2 30.4C36 31.6 40 31.6 42.8 30.4" stroke="#c0706a" stroke-width=".8"/></g>
<path d="M10.6 68L30.8 45.6L49.4 61.4L50 68Z" fill="#f4661c"/><path d="M30.8 45.6L49.4 61.4L50 68H47.6L46.8 62.6L30 47Z" fill="#dc5212"/>
</g></g></svg>
<svg class="b" style="left:1192px;top:499px;" width="68" height="68" viewBox="0 0 68 68" fill="none"><defs><clipPath id="e3"><rect width="68" height="68" rx="8.5"/></clipPath>
<linearGradient id="e3f" x1="0" y1="0" x2="1" y2="0"><stop offset="0" stop-color="#f0c6b0"/><stop offset="1" stop-color="#dcaa94"/></linearGradient>
<linearGradient id="e3h" x1="0" y1="0" x2="1" y2="0"><stop offset="0" stop-color="#74422f"/><stop offset="1" stop-color="#5a3224"/></linearGradient></defs>
<g clip-path="url(#e3)"><rect width="68" height="68" fill="#f6c4a8"/><g filter="url(#bl)">
<path d="M15 47C17 40 22 32 24 22C26 11 31 7 37 7C46 7 50.6 14 51 24C51.4 32 52 40 53 45C50 47 47 46 45 44L27 44C23 49 18 50 15 47Z" fill="url(#e3h)"/>
<path d="M11 68C11.6 54 16 45 25 42L45 41.6C51 44 53 54 53 68Z" fill="#f3efee"/>
<path d="M30.6 34H41L41.6 43L36 46L30 43Z" fill="#e4b6a0"/>
<path d="M26.2 25C26.2 11.6 44.4 11.6 44.4 25C44.4 32 40.6 37.6 35.4 37.6C30.4 37.6 26.2 32 26.2 25Z" fill="url(#e3f)"/>
<path d="M24.8 27C22.6 13 32 8.6 37.6 9.4C44 10 48 15 46.4 26C45 19 41.6 15.4 36.6 16C31 16.2 27.4 20 24.8 27Z" fill="#643829"/>
<ellipse cx="31.2" cy="25" rx="1.7" ry="1" fill="#3a2620"/><ellipse cx="39.6" cy="25" rx="1.7" ry="1" fill="#3a2620"/>
<path d="M32.6 31.6C34.4 33 37.4 33 39 31.4" stroke="#b8645a" stroke-width="1"/>
<path d="M44 38C48 41 51.4 45 51.4 50L46.6 52Z" fill="#5e3426"/><path d="M16 44C18 40 22 36 24 32L27 44L21 52Z" fill="#6a3c2c"/>
<path d="M16.3 50.8L37.8 49L39 59L19.2 64.8Z" fill="#a3252a"/><path d="M16.3 50.8L37.8 49L38 50.6L16.8 52.6Z" fill="#e6d6c2"/>
<path d="M35 57C38 54.6 42.6 55 43.4 58.6C44 62 40.6 65.6 37 66Z" fill="#e6b6a0"/>
<path d="M41 62C46 60 50 57 52 52L53 66L43 68Z" fill="#f3efee"/>
</g></g></svg>
<span class="t" style="left:979.0px;top:575.00px;font-size:13px;letter-spacing:0.083px;color:#f4f4f6;">Nein</span>
<span class="t" style="left:1057.0px;top:575.00px;font-size:13px;letter-spacing:0.240px;color:#8b8b91;">Herr</span>
<span class="t" style="left:1135.5px;top:575.00px;font-size:13px;letter-spacing:-0.411px;color:#8b8b91;">Frau</span>
<span class="t" style="left:1213.0px;top:575.00px;font-size:13px;letter-spacing:-0.010px;color:#8b8b91;">Kind</span>
<div class="b" style="left:942px;top:588px;width:391px;height:39px;background:#212125;border-radius:0 0 8px 8px;box-shadow:0 -2px 4px rgba(15,15,20,.3);"></div>
<div class="b" style="left:958px;top:597px;width:110px;height:22px;background:transparent;border-radius:4px;border:1px solid #b576ea;"></div>
<span class="t" style="left:970.5px;top:602.00px;font-size:13px;letter-spacing:0.171px;color:#c46cf5;">Auto-Untertitel</span>
<div class="b" style="left:1217px;top:597px;width:100px;height:22px;background:#343439;border-radius:4px;"></div>
<span class="t" style="left:1229.0px;top:602.00px;font-size:13px;letter-spacing:-0.141px;color:#f0f0f2;">Zurücksetzen</span>
<div class="b" style="left:8px;top:634px;width:1325px;height:254px;background:#15151a;border-radius:8px;"></div>
<div class="b" style="left:8px;top:634px;width:1325px;height:32.5px;background:#28282c;border-radius:8px 8px 0 0;"></div>
<svg class="b" style="left:17.0px;top:640.0px;" width="20" height="20" viewBox="0 0 20 20" fill="none"><path d="M6.4 3.4L2.6 7.2L6.4 11" stroke="#e8e8ea" stroke-width="1.5" stroke-linecap="round" stroke-linejoin="round"/><path d="M3 7.2H12A4.6 4.6 0 0 1 12 16.4H7" stroke="#e8e8ea" stroke-width="1.5" stroke-linecap="round" stroke-linejoin="round"/></svg>
<svg class="b" style="left:55.0px;top:640.0px;" width="20" height="20" viewBox="0 0 20 20" fill="none"><path d="M13.6 3.4L17.4 7.2L13.6 11" stroke="#4a4a50" stroke-width="1.5" stroke-linecap="round" stroke-linejoin="round"/><path d="M17 7.2H8A4.6 4.6 0 0 0 8 16.4H13" stroke="#4a4a50" stroke-width="1.5" stroke-linecap="round"/></svg>
<svg class="b" style="left:93.0px;top:640.0px;" width="20" height="20" viewBox="0 0 20 20" fill="none"><path d="M2 5H18M7 4.8V2.4H13V4.8" stroke="#e8e8ea" stroke-width="1.5" stroke-linecap="round" stroke-linejoin="round"/><path d="M4 5.4L4.8 16.6A1.8 1.8 0 0 0 6.6 18.2H13.4A1.8 1.8 0 0 0 15.2 16.6L16 5.4" stroke="#e8e8ea" stroke-width="1.5" stroke-linecap="round" stroke-linejoin="round"/><path d="M8.4 8.8V14.4M11.6 8.8V14.4" stroke="#e8e8ea" stroke-width="1.5" stroke-linecap="round" stroke-linejoin="round"/></svg>
<div class="b" style="left:131px;top:642px;width:1px;height:16px;background:#34343a;"></div>
<svg class="b" style="left:147.5px;top:640.0px;" width="20" height="20" viewBox="0 0 20 20" fill="none"><circle cx="5" cy="15" r="2.6" stroke="#e8e8ea" stroke-width="1.5" stroke-linecap="round" stroke-linejoin="round"/><circle cx="15" cy="15" r="2.6" stroke="#e8e8ea" stroke-width="1.5" stroke-linecap="round" stroke-linejoin="round"/><path d="M6.6 13L15.4 2.6M13.4 13L4.6 2.6" stroke="#e8e8ea" stroke-width="1.5" stroke-linecap="round" stroke-linejoin="round"/></svg>
<span class="t" style="left:173.5px;top:644.00px;font-size:13px;letter-spacing:0.103px;color:#e8e8ea;">Teilen</span>
<svg class="b" style="left:211.5px;top:647.5px;" width="9" height="6" viewBox="0 0 9 6" fill="none"><path d="M1 1H8L4.5 5.2Z" fill="#e8e8ea"/></svg>
<div class="b" style="left:244.5px;top:642px;width:1px;height:16px;background:#34343a;"></div>
<svg class="b" style="left:261.5px;top:640.0px;" width="20" height="20" viewBox="0 0 20 20" fill="none"><path d="M6 3H14A1.8 1.8 0 0 1 15.8 4.8V11.6C15.8 12.2 15.5 12.7 15 13L10.8 16.6C10.3 17 9.7 17 9.2 16.6L5 13C4.5 12.7 4.2 12.2 4.2 11.6V4.8A1.8 1.8 0 0 1 6 3Z" stroke="#e8e8ea" stroke-width="1.5" stroke-linecap="round" stroke-linejoin="round"/><path d="M7.4 7.2H12.6M7.4 10H12.6" stroke="#e8e8ea" stroke-width="1.3" stroke-linecap="round"/></svg>
<svg class="b" style="left:300.0px;top:640.0px;" width="20" height="20" viewBox="0 0 20 20" fill="none"><rect x="2.6" y="2.6" width="14.8" height="14.8" rx="4" stroke="#e8e8ea" stroke-width="1.5" stroke-linecap="round" stroke-linejoin="round"/><path d="M7 7H13M10 7V13.4" stroke="#e8e8ea" stroke-width="1.6" stroke-linecap="round"/></svg>
<svg class="b" style="left:322.5px;top:647.5px;" width="9" height="6" viewBox="0 0 9 6" fill="none"><path d="M1 1H8L4.5 5.2Z" fill="#e8e8ea"/></svg>
<svg class="b" style="left:348.0px;top:640.0px;" width="20" height="20" viewBox="0 0 20 20" fill="none"><path d="M4.4 15.6A8 8 0 1 1 15.6 15.6" stroke="#e8e8ea" stroke-width="1.5" stroke-linecap="round" stroke-linejoin="round"/><path d="M10 12.2L13.2 7" stroke="#e8e8ea" stroke-width="1.5" stroke-linecap="round" stroke-linejoin="round"/><circle cx="10" cy="12.4" r="1.5" stroke="#e8e8ea" stroke-width="1.5" stroke-linecap="round" stroke-linejoin="round"/><path d="M4.6 10H5.6M14.4 10H15.4M10 4.6V5.4" stroke="#e8e8ea" stroke-width="1.3" stroke-linecap="round"/></svg>
<svg class="b" style="left:386.0px;top:640.0px;" width="20" height="20" viewBox="0 0 20 20" fill="none"><path d="M4 6.4A8 8 0 1 1 2.2 10.6" stroke="#e8e8ea" stroke-width="1.5" stroke-linecap="round" stroke-linejoin="round"/><path d="M3.2 2.4V6.6H7.4" stroke="#e8e8ea" stroke-width="1.5" stroke-linecap="round" stroke-linejoin="round"/><path d="M8.4 6.8L13.4 10L8.4 13.2Z" stroke="#e8e8ea" stroke-width="1.5" stroke-linecap="round" stroke-linejoin="round"/></svg>
<div class="b" style="left:424px;top:642px;width:1px;height:16px;background:#34343a;"></div>
<svg class="b" style="left:441.0px;top:640.0px;" width="20" height="20" viewBox="0 0 20 20" fill="none"><rect x="4" y="4.6" width="13" height="12.6" rx="2.6" stroke="#e8e8ea" stroke-width="1.5" stroke-linecap="round" stroke-linejoin="round"/><path d="M8 8.6H13M10.5 8.6V14" stroke="#e8e8ea" stroke-width="1.5" stroke-linecap="round"/><path d="M3.4 1V4.4M1.6 2.7H5.2" stroke="#e8e8ea" stroke-width="1.1" stroke-linecap="round"/></svg>
<svg class="b" style="left:479.0px;top:640.0px;" width="20" height="20" viewBox="0 0 20 20" fill="none"><circle cx="10" cy="10" r="7.8" stroke="#e8e8ea" stroke-width="1.5"/><path d="M10 5.8V13.6M6.8 10.6L10 13.8L13.2 10.6" stroke="#e8e8ea" stroke-width="1.6" stroke-linecap="round" stroke-linejoin="round"/></svg>
<svg class="b" style="left:517.5px;top:640.0px;" width="20" height="20" viewBox="0 0 20 20" fill="none"><path d="M5 6V4.4A1.6 1.6 0 0 1 6.6 2.8H13.4A1.6 1.6 0 0 1 15 4.4V6" stroke="#e8e8ea" stroke-width="1.5" stroke-linecap="round" stroke-linejoin="round"/><rect x="2.6" y="6.2" width="14.8" height="9.8" rx="2.2" stroke="#e8e8ea" stroke-width="1.5" stroke-linecap="round" stroke-linejoin="round"/><path d="M10 13.6V8.8M7.8 10.8L10 8.6L12.2 10.8" stroke="#e8e8ea" stroke-width="1.5" stroke-linecap="round" stroke-linejoin="round"/><circle cx="17.6" cy="17.4" r="1" fill="#e8e8ea"/></svg>
<svg class="b" style="left:941.0px;top:640.0px;" width="20" height="20" viewBox="0 0 20 20" fill="none"><rect x="7.2" y="2" width="5.6" height="10.4" rx="2.8" stroke="#e8e8ea" stroke-width="1.5" stroke-linecap="round" stroke-linejoin="round"/><path d="M4.2 9.6C4.2 13 6.8 15 10 15C13.2 15 15.8 13 15.8 9.6M10 15V18" stroke="#e8e8ea" stroke-width="1.5" stroke-linecap="round" stroke-linejoin="round"/></svg>
<div class="b" style="left:981.5px;top:642px;width:1px;height:16px;background:#34343a;"></div>
<div class="b" style="left:1003px;top:639px;width:22px;height:21.5px;background:#2c2c31;border-radius:3px;"></div>
<svg class="b" style="left:1004px;top:643px;" width="20" height="14" viewBox="0 0 20 14" fill="none"><path d="M8.2 3.4H5.8A2.6 2.6 0 0 0 3.2 6V8A2.6 2.6 0 0 0 5.8 10.6H8.2M11.8 3.4H14.2A2.6 2.6 0 0 1 16.8 6V8A2.6 2.6 0 0 1 14.2 10.6H11.8" stroke="#cb7bfa" stroke-width="2.7"/><path d="M6.6 7H13.4" stroke="#8d7aa8" stroke-width="2"/></svg>
<div class="b" style="left:1045.5px;top:639px;width:22px;height:21.5px;background:#2c2c31;border-radius:3px;"></div>
<svg class="b" style="left:1046px;top:640px;" width="21" height="20" viewBox="0 0 21 20" fill="none"><rect x="2" y="7.2" width="7" height="5.6" rx="1.4" fill="#cb7bfa"/><rect x="11" y="7.2" width="7" height="5.6" rx="1.4" fill="#cb7bfa"/><path d="M10 3.2V6.6M10 13.4V16.8M7.6 3.6L9 6.4M12.4 3.6L11 6.4M7.6 16.4L9 13.6M12.4 16.4L11 13.6" stroke="#cb7bfa" stroke-width="1" stroke-linecap="round"/></svg>
<svg class="b" style="left:1087.8px;top:640.0px;" width="20" height="20" viewBox="0 0 20 20" fill="none"><path d="M7.4 6.8H4.6A3.2 3.2 0 0 0 4.6 13.2H7.4M12.6 6.8H15.4A3.2 3.2 0 0 1 15.4 13.2H12.6" stroke="#e8e8ea" stroke-width="1.5"/><path d="M10 4.8V15.2" stroke="#e8e8ea" stroke-width="1.5" stroke-linecap="round"/></svg>
<svg class="b" style="left:1130.0px;top:640.0px;" width="20" height="20" viewBox="0 0 20 20" fill="none"><rect x="1.2" y="3.6" width="17.6" height="12.8" rx="4.2" stroke="#e8e8ea" stroke-width="1.5" stroke-linecap="round" stroke-linejoin="round"/><path d="M6.6 10H13.4" stroke="#e8e8ea" stroke-width="1.6"/><path d="M7.4 7.4V12.6L4.2 10ZM12.6 7.4V12.6L15.8 10Z" fill="#e8e8ea"/></svg>
<svg class="b" style="left:1171.0px;top:640.0px;" width="20" height="20" viewBox="0 0 20 20" fill="none"><circle cx="10" cy="10" r="7.4" stroke="#e8e8ea" stroke-width="1.4"/><path d="M6.8 10H13.2" stroke="#e8e8ea" stroke-width="1.5" stroke-linecap="round"/></svg>
<div class="b" style="left:1199px;top:648.5px;width:98px;height:3px;background:#2a2a2f;border-radius:1.5px;"></div>
<div class="b" style="left:1199px;top:644px;width:12px;height:12px;background:#28282c;border-radius:6px;border:2.4px solid #f4f4f6;"></div>
<svg class="b" style="left:1303.5px;top:640.0px;" width="20" height="20" viewBox="0 0 20 20" fill="none"><circle cx="10" cy="10" r="7.4" stroke="#e8e8ea" stroke-width="1.4"/><path d="M6.8 10H13.2M10 6.8V13.2" stroke="#e8e8ea" stroke-width="1.5" stroke-linecap="round"/></svg>
<div class="b" style="left:107px;top:667px;width:1px;height:220px;background:#202025;"></div>
<svg class="b" style="left:0;top:667px" width="1333" height="27" viewBox="0 0 1333 27" fill="none"><path d="M160.00 16V25 M189.25 19.6V25 M218.50 19.6V25 M247.75 19.6V25 M277.00 19.6V25 M306.25 16V25 M335.50 19.6V25 M364.75 19.6V25 M394.00 19.6V25 M423.25 19.6V25 M452.50 16V25 M481.75 19.6V25 M511.00 19.6V25 M540.25 19.6V25 M569.50 19.6V25 M598.75 16V25 M628.00 19.6V25 M657.25 19.6V25 M686.50 19.6V25 M715.75 19.6V25 M745.00 16V25 M774.25 19.6V25 M803.50 19.6V25 M832.75 19.6V25 M862.00 19.6V25 M891.25 16V25 M920.50 19.6V25 M949.75 19.6V25 M979.00 19.6V25 M1008.25 19.6V25 M1037.50 16V25 M1066.75 19.6V25 M1096.00 19.6V25 M1125.25 19.6V25 M1154.50 19.6V25 M1183.75 16V25 M1213.00 19.6V25 M1242.25 19.6V25 M1271.50 19.6V25 M1300.75 19.6V25 M1330.00 16V25" stroke="#45454b" stroke-width="1"/><path d="M160 25.6H1333" stroke="#0c0c10" stroke-width="1.6"/></svg>
<div class="b" style="left:108px;top:667px;width:1225px;height:24px;overflow:hidden;">
<span class="t" style="left:187.6px;top:4.14px;font-size:12px;letter-spacing:-0.615px;color:#54545a;">0:01</span>
<span class="t" style="left:333.8px;top:4.14px;font-size:12px;letter-spacing:-0.615px;color:#54545a;">0:02</span>
<span class="t" style="left:480.1px;top:4.14px;font-size:12px;letter-spacing:-0.615px;color:#54545a;">0:03</span>
<span class="t" style="left:626.3px;top:4.14px;font-size:12px;letter-spacing:-0.615px;color:#54545a;">0:04</span>
<span class="t" style="left:772.5px;top:4.14px;font-size:12px;letter-spacing:-0.615px;color:#54545a;">0:05</span>
<span class="t" style="left:918.8px;top:4.14px;font-size:12px;letter-spacing:-0.615px;color:#54545a;">0:06</span>
<span class="t" style="left:1065.0px;top:4.14px;font-size:12px;letter-spacing:-0.615px;color:#54545a;">0:07</span>
<span class="t" style="left:1211.3px;top:4.14px;font-size:12px;letter-spacing:-0.615px;color:#54545a;">0:08</span>
</div>
<div class="b" style="left:11.5px;top:731.5px;width:92.5px;height:61.5px;background:#222227;border-radius:4px;"></div>
<div class="b" style="left:160px;top:731.5px;width:1173px;height:61.5px;background:#222227;border-radius:4px 0 0 4px;"></div>
<div class="b" style="left:114.5px;top:743.5px;width:39.5px;height:39px;background:#222227;border-radius:7px;border:1px solid #34343a;"></div>
<span class="t" style="left:118.3px;top:757.89px;font-size:11px;font-weight:700;letter-spacing:-0.097px;color:#f4f4f6;">Cover</span>
<svg class="b" style="left:25.5px;top:756px;" width="12" height="12" viewBox="0 0 12 12" fill="none"><rect x="1.2" y="1.2" width="9.6" height="9.6" rx="2" fill="#5c5c62" stroke="#a4a4aa" stroke-width="1"/><path d="M4.2 3V9M7.8 3V9M4.2 6H7.8" stroke="#d6d6da" stroke-width="1.5"/></svg>
<svg class="b" style="left:52px;top:756px;" width="13" height="12" viewBox="0 0 13 12" fill="none"><ellipse cx="6.5" cy="6" rx="4.9" ry="3.7" stroke="#8f8f95" stroke-width="1.1" stroke-linecap="round" stroke-linejoin="round"/><ellipse cx="6.5" cy="6" rx="1.7" ry="1.6" stroke="#8f8f95" stroke-width="1.1" stroke-linecap="round" stroke-linejoin="round"/></svg>
<svg class="b" style="left:77px;top:755px;" width="15" height="14" viewBox="0 0 15 14" fill="none"><path d="M2 5.2H4.2L7.4 2.4V11.6L4.2 8.8H2Z" stroke="#8f8f95" stroke-width="1.1" stroke-linecap="round" stroke-linejoin="round"/><path d="M9 3.4C11.6 4.4 11.6 9.6 9 10.6Z" fill="#5c5c62" stroke="#8f8f95" stroke-width="1"/><path d="M11.6 3.2C13.2 5 13.2 9 11.6 10.8" stroke="#8f8f95" stroke-width="1.1" stroke-linecap="round" stroke-linejoin="round"/></svg>
<svg class="b" style="left:26px;top:810px;" width="12" height="14" viewBox="0 0 12 14" fill="none"><path d="M6.4 11V2.6C7 4 9 4.4 8.8 6.6" stroke="#8f8f95" stroke-width="1.1" stroke-linecap="round" stroke-linejoin="round"/><circle cx="4.8" cy="11" r="1.7" stroke="#8f8f95" stroke-width="1.1" stroke-linecap="round" stroke-linejoin="round"/><path d="M2.6 1V4M1.2 2.5H4" stroke="#8f8f95" stroke-width=".9" stroke-linecap="round"/></svg>
<svg class="b" style="left:51px;top:810px;" width="15" height="14" viewBox="0 0 15 14" fill="none"><path d="M2 5.2H4.2L7.4 2.4V11.6L4.2 8.8H2Z" stroke="#8f8f95" stroke-width="1.1" stroke-linecap="round" stroke-linejoin="round"/><path d="M9 3.4C11.6 4.4 11.6 9.6 9 10.6Z" fill="#5c5c62" stroke="#8f8f95" stroke-width="1"/><path d="M11.6 3.2C13.2 5 13.2 9 11.6 10.8" stroke="#8f8f95" stroke-width="1.1" stroke-linecap="round" stroke-linejoin="round"/></svg>
<div class="b" style="left:161px;top:796px;width:614px;height:44px;border-radius:5px;background:#5a3a9b;border:2px solid #f6f6f8;overflow:hidden;">
<svg class="b" style="left:-2px;top:-2px" width="614" height="44" viewBox="0 0 614 44"><path d="M2 42V20.8H4.0V20.8H6.0V16.0H8.0V18.2H10.5V14.6H12.5V18.4H14.0V19.9H16.0V20.1H18.0V22.8H19.5V19.4H21.5V26.6H23.5V21.9H26.0V18.2H27.5V17.3H29.5V16.6H31.0V16.2H33.0V15.8H35.5V16.9H37.5V17.8H39.0V17.2H40.5V14.8H42.5V12.6H44.5V13.1H46.0V14.4H48.0V15.7H50.0V18.3H52.0V13.3H54.5V16.7H56.5V20.2H58.5V19.8H60.5V21.2H63.0V18.1H65.0V21.6H67.5V21.3H69.5V17.2H72.0V21.6H73.5V22.3H75.5V16.5H78.0V14.3H80.0V13.5H82.0V16.9H84.0V19.8H86.0V16.5H88.5V18.3H90.5V27.4H92.0V23.2H94.0V29.5H96.0V24.2H98.0V15.3H99.5V16.6H102.0V14.8H104.0V14.5H106.0V15.9H108.0V20.9H110.0V16.6H112.0V15.1H114.5V15.8H116.0V17.0H118.0V14.3H119.5V18.1H121.0V29.9H122.5V24.6H124.0V27.6H126.0V35.8H128.0V24.8H129.5V25.0H131.0V25.1H133.5V20.8H135.0V20.8H136.5V19.5H138.5V17.7H141.0V26.9H143.5V15.2H145.0V17.5H146.5V17.6H148.5V16.5H150.5V15.6H152.5V12.7H155.0V16.3H157.0V17.3H159.0V21.6H161.0V21.4H163.0V15.5H165.5V18.2H167.5V19.1H169.0V16.6H171.0V19.7H173.0V22.2H175.0V21.3H177.0V16.7H179.5V16.6H181.0V15.2H183.0V20.4H185.5V10.8H187.5V15.0H189.5V15.9H191.0V18.5H192.5V21.3H194.5V23.6H196.5V25.5H198.0V21.8H199.5V24.4H201.5V24.2H204.0V24.7H206.0V36.0H208.0V22.2H210.0V26.9H211.5V28.9H214.0V25.3H216.0V24.7H217.5V26.0H219.0V25.7H220.5V25.8H222.5V22.3H224.0V22.5H226.0V13.8H228.0V11.8H229.5V18.9H232.0V18.5H234.0V15.5H236.5V12.5H238.5V16.8H240.5V20.6H243.0V23.9H245.5V21.4H248.0V19.2H250.5V16.8H252.5V15.5H254.0V16.0H255.5V13.3H258.0V23.9H260.0V16.7H262.0V15.4H264.0V16.2H266.0V12.7H268.0V14.9H270.0V17.5H272.0V15.6H273.5V20.9H275.5V25.4H278.0V24.5H280.5V18.8H282.5V28.6H284.5V21.2H287.0V19.0H289.5V19.1H292.0V21.8H294.0V22.9H296.0V24.1H298.0V20.8H300.0V15.2H302.0V26.8H304.0V15.7H306.0V15.4H308.0V25.7H309.5V19.0H311.5V16.3H313.0V15.4H315.0V13.2H317.0V19.9H318.5V10.4H321.0V11.0H323.0V17.5H325.0V11.8H326.5V16.9H328.5V13.6H330.5V14.4H332.5V14.8H334.0V17.5H336.0V22.3H338.0V22.6H339.5V23.2H341.5V24.8H344.0V21.6H346.0V21.3H348.0V20.6H350.0V18.6H352.0V25.8H354.0V30.4H356.0V25.6H358.5V19.4H360.5V20.5H363.0V21.8H365.5V22.6H367.0V26.7H368.5V23.1H370.5V28.0H372.0V33.6H373.5V25.3H375.5V28.7H378.0V30.0H380.0V37.4H382.5V31.0H384.5V22.7H386.5V24.8H389.0V25.4H391.0V25.7H393.5V29.1H395.5V33.7H397.5V42.0H399.0V31.6H400.5V35.1H402.5V37.0H404.5V38.6H406.5V26.6H408.5V28.3H410.5V18.6H412.5V21.8H414.5V21.2H417.0V20.7H418.5V22.0H420.5V21.4H422.5V21.2H424.5V21.1H426.5V20.7H428.5V21.4H430.5V21.7H432.5V20.6H435.0V21.0H437.0V22.9H439.0V20.0H441.0V26.1H442.5V17.8H444.0V18.9H446.5V16.8H448.5V15.7H450.5V17.5H452.5V17.0H454.0V18.5H456.5V17.4H458.5V19.3H460.5V24.1H463.0V31.7H465.0V32.0H466.5V41.4H469.0V33.5H471.0V39.7H472.5V40.8H475.0V33.9H477.0V35.0H479.0V16.7H480.5V14.4H483.0V13.9H485.0V11.9H487.0V12.4H489.5V22.1H491.5V11.7H494.0V12.3H496.5V12.9H498.5V20.1H500.5V11.6H502.5V12.8H504.0V13.5H505.5V16.7H507.0V29.0H509.5V21.4H511.0V31.0H513.0V16.9H515.0V18.4H517.5V21.0H519.5V20.3H521.5V22.3H523.0V23.1H525.0V23.2H527.0V23.5H528.5V22.0H530.0V20.2H531.5V18.6H533.5V18.1H535.5V17.0H537.5V17.5H539.0V19.9H541.0V24.1H543.0V29.0H544.5V29.8H546.0V29.5H548.0V26.0H550.0V23.4H552.0V25.6H554.0V23.7H556.5V24.4H558.5V23.9H561.0V24.8H563.0V25.8H565.0V27.5H567.5V26.1H569.0V28.7H570.5V28.9H572.5V29.0H575.0V25.9H577.0V27.6H579.5V33.5H582.0V33.7H584.0V37.1H586.0V42.0H588.0V42.0H590.5V42.0H592.5V38.5H595.0V41.5H597.0V40.6H598.5V41.4H600.0V42.0H602.0V40.0H604.0V42.0H606.0V42.0H607.5V42.0H609.0V39.9H610.5V41.5H612.0V42Z" fill="#b3a0d8"/>
<rect x="2" y="2" width="6.5" height="40" fill="#2c1a55"/><rect x="605" y="2" width="7" height="40" fill="#2c1a55"/>
<rect x="2.2" y="16" width="2" height="11.5" rx=".6" fill="#fff"/><rect x="607.9" y="16" width="2" height="11.5" rx=".6" fill="#fff"/></svg></div>
<svg class="b" style="left:175px;top:800.6px;" width="12" height="15" viewBox="0 0 12 15" fill="none"><path d="M6.4 11V2.6C7 4 9.2 4.4 9 6.8" stroke="#f0f0f2" stroke-width="1.1" stroke-linecap="round"/><circle cx="4.8" cy="11.2" r="1.8" stroke="#f0f0f2" stroke-width="1.1"/><path d="M2.4 1.2V4M1 2.6H3.8" stroke="#f0f0f2" stroke-width=".9" stroke-linecap="round"/></svg>
<span class="t" style="left:192.5px;top:802.04px;font-size:12px;letter-spacing:0.298px;color:#f0eef6;">0:04 RecA2026030701_Monster</span>
<div class="b" style="left:159.6px;top:667px;width:1.5px;height:221px;background:#f4f4f6;"></div>
<svg class="b" style="left:160px;top:668.5px;" width="7" height="15" viewBox="0 0 7 15" fill="none"><path d="M0 0H3A3.6 3.6 0 0 1 6.6 3.6V9.4C6.6 10.4 6.2 11 5.4 11.6L0 14.4Z" fill="#f4f4f6"/></svg>
<svg class="b" style="left:160px;top:694px;" width="12" height="35" viewBox="0 0 12 35" fill="none"><path d="M0 0H1A10.4 10.4 0 0 1 11.4 10.4V24.6A10.4 10.4 0 0 1 1 35H0Z" fill="#f4f4f6"/><circle cx="4.2" cy="23" r="2" stroke="#1b1b20" stroke-width="1.1"/><circle cx="-4.2" cy="23" r="2" stroke="#1b1b20" stroke-width="1.1"/><path d="M-3 21.4L5.6 12.6M3 21.4L-5.6 12.6" stroke="#1b1b20" stroke-width="1.1" stroke-linecap="round"/><path d="M.4 8.6V13" stroke="#1b1b20" stroke-width="1"/></svg>
</body></html>
